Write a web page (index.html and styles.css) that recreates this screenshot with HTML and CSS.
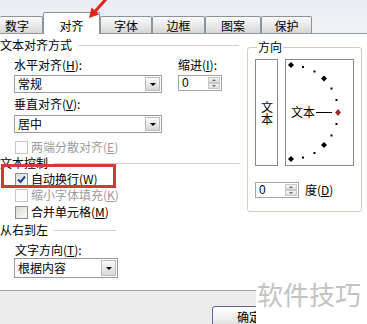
FILE: index.html
```html
<!DOCTYPE html>
<html lang="zh-CN">
<head>
    <meta charset="UTF-8">
    <title>单元格格式 - 对齐</title>
    <link rel="stylesheet" href="styles.css">
</head>
<body>
    <div class="dialog">
        <div class="tabs">
            <div class="tab first">数字</div>
            <div class="tab active">对齐</div>
            <div class="tab">字体</div>
            <div class="tab">边框</div>
            <div class="tab">图案</div>
            <div class="tab">保护</div>
        </div>

        <div class="panel">
            <div class="left">
                <div class="group-title t-align"><span>文本对齐方式</span></div>

                <div class="align-row">
                    <div class="align-col">
                        <div class="label l-h">水平对齐(<u>H</u>):</div>
                        <div class="select s-h"><span>常规</span><i class="drop"></i></div>
                        <div class="label l-v">垂直对齐(<u>V</u>):</div>
                        <div class="select s-v"><span>居中</span><i class="drop"></i></div>
                    </div>
                    <div class="indent">
                        <div class="label l-h">缩进(<u>I</u>):</div>
                        <div class="spin s-indent">
                            <span>0</span>
                            <div class="spin-btns"><i class="up"></i><i class="down"></i></div>
                        </div>
                    </div>
                </div>

                <div class="check disabled c-justify">
                    <i class="box"></i><span>两端分散对齐(<u>E</u>)</span>
                </div>

                <div class="group-title t-control"><span>文本控制</span></div>
                <div class="check c-wrap">
                    <i class="box">
                        <svg width="11" height="11" viewBox="0 0 11 11"><path d="M2 5.5 L4.5 8 L9 2.5" fill="none" stroke="#24408e" stroke-width="2"/></svg>
                    </i><span>自动换行(<u>W</u>)</span>
                </div>
                <div class="check disabled c-shrink">
                    <i class="box"></i><span>缩小字体填充(<u>K</u>)</span>
                </div>
                <div class="check c-merge">
                    <i class="box"></i><span>合并单元格(<u>M</u>)</span>
                </div>

                <div class="group-title t-rtl"><span>从右到左</span></div>
                <div class="label l-dir">文字方向(<u>T</u>):</div>
                <div class="select s-dir"><span>根据内容</span><i class="drop"></i></div>
            </div>

            <fieldset class="orient">
                <legend>方向</legend>
                <div class="orient-boxes">
                    <div class="vbox"><span>文本</span></div>
                    <div class="dial">
                        <svg width="67" height="105" viewBox="0 0 67 105">
                            <g fill="#000">
                                <polygon points="5,2 8,5 5,8 2,5"/>
                                <rect x="16" y="6" width="2" height="2"/>
                                <rect x="27.5" y="10.5" width="2" height="2"/>
                                <polygon points="38,15.5 41,18.5 38,21.5 35,18.5"/>
                                <rect x="44.5" y="27.5" width="2" height="2"/>
                                <rect x="49.5" y="39" width="2" height="2"/>
                                <rect x="49.5" y="63" width="2" height="2"/>
                                <rect x="44.5" y="74.5" width="2" height="2"/>
                                <polygon points="38,82 41,85 38,88 35,85"/>
                                <rect x="27.5" y="92" width="2" height="2"/>
                                <rect x="16" y="96.5" width="2" height="2"/>
                                <polygon points="5,96 8,99 5,102 2,99"/>
                            </g>
                            <text x="5" y="57" font-size="12" font-family="Noto Sans CJK SC, sans-serif">文本</text>
                            <line x1="30" y1="52.5" x2="46" y2="52.5" stroke="#000" stroke-width="1"/>
                            <polygon points="52,49 55,52.5 52,56 49,52.5" fill="#a32a2a"/>
                        </svg>
                    </div>
                </div>
                <div class="degree-row">
                    <div class="spin s-deg">
                        <span>0</span>
                        <div class="spin-btns"><i class="up"></i><i class="down"></i></div>
                    </div>
                    <div class="label">度(<u>D</u>)</div>
                </div>
            </fieldset>
        </div>

        <div class="footer">
            <div class="btn">确定</div>
        </div>

        <!-- overlays -->
        <div class="highlight"></div>
        <svg class="arrow" width="26" height="22" viewBox="0 0 26 22">
            <line x1="22" y1="-2" x2="10" y2="11.5" stroke="#e3231c" stroke-width="3"/>
            <polygon points="4,18 14,14.5 6.5,7.5" fill="#e3231c"/>
        </svg>
        <div class="watermark">软件技巧</div>
    </div>
</body>
</html>
```

FILE: styles.css
```css
* { box-sizing: border-box; }

body {
    margin: 0;
    font-family: "Noto Sans CJK SC", "Liberation Sans", sans-serif;
    font-size: 12px;
    color: #000;
    background: #fff;
    overflow: hidden;
}

u { text-decoration: underline; }

.dialog {
    position: relative;
    width: 367px;
    height: 324px;
    display: flex;
    flex-direction: column;
    overflow: hidden;
}

/* tabs */
.tabs {
    height: 34px;
    flex-shrink: 0;
    display: flex;
    align-items: flex-end;
    background: linear-gradient(#e9edf3, #f1f2f4);
    border-bottom: 1px solid #8f9aa3;
}

.tab {
    width: 52px;
    height: 17px;
    padding-top: 2px;
    line-height: 14px;
    text-align: center;
    border: 1px solid #8c9499;
    border-bottom: none;
    border-radius: 2px 2px 0 0;
    background: linear-gradient(#fbfbfb, #e6e6e6 60%, #d6d6d6);
}

.tab.first {
    width: 43px;
    padding-right: 8px;
    border-left: none;
}

.tab.active {
    width: 57px;
    height: 22px;
    padding-top: 6px;
    margin-bottom: -1px;
    background: #fff;
}

.tab:nth-child(4) { width: 53px; }
.tab:nth-child(5) { width: 56px; }
.tab:nth-child(6) { width: 51px; }

/* main panel */
.panel {
    height: 256px;
    flex-shrink: 0;
    display: flex;
    background: #fff;
}

.left {
    width: 239px;
    padding-top: 4px;
    display: flex;
    flex-direction: column;
}

.label {
    height: 14px;
    line-height: 14px;
    white-space: nowrap;
}

.group-title {
    height: 14px;
    line-height: 14px;
    display: flex;
    align-items: center;
}

.group-title::after {
    content: "";
    flex: 1;
    height: 1px;
    margin-left: 6px;
    background: #d4d0c8;
}

.t-control { margin-top: 2px; }
.t-rtl { margin-top: 4px; width: 116px; }

.align-row {
    display: flex;
}

.align-col {
    margin-left: 14px;
    width: 148px;
    display: flex;
    flex-direction: column;
}

.l-h { margin-top: 6px; }
.l-v { margin-top: 4px; }

.select {
    display: flex;
    height: 18px;
    border: 1px solid #989898;
    background: #fff;
}

.select span {
    flex: 1;
    padding-left: 3px;
    line-height: 16px;
}

.s-h { margin-top: 3px; }
.s-v { margin-top: 4px; }

.drop {
    width: 15px;
    margin: 1px;
    border: 1px solid #bcbcbc;
    background: linear-gradient(#fafafa, #d8d8d8);
    display: flex;
    align-items: center;
    justify-content: center;
}

.drop::after {
    content: "";
    border-left: 3px solid transparent;
    border-right: 3px solid transparent;
    border-top: 3px solid #000;
}

.indent {
    margin-left: 16px;
    display: flex;
    flex-direction: column;
}

.spin {
    display: flex;
    width: 44px;
    height: 16px;
    border: 1px solid #a5a5a5;
    background: #fff;
}

.spin span {
    flex: 1;
    padding-left: 3px;
    line-height: 14px;
    font-family: "Liberation Sans", sans-serif;
}

.s-indent { margin-top: 3px; }

.spin-btns {
    width: 14px;
    padding: 1px;
    display: flex;
    flex-direction: column;
}

.spin-btns i {
    flex: 1;
    border: 1px solid #c8c8c8;
    background: linear-gradient(#f6f6f6, #dcdcdc);
    display: flex;
    align-items: center;
    justify-content: center;
}

.spin-btns .up::after {
    content: "";
    border-left: 2px solid transparent;
    border-right: 2px solid transparent;
    border-bottom: 2px solid #5b6f86;
}

.spin-btns .down::after {
    content: "";
    border-left: 2px solid transparent;
    border-right: 2px solid transparent;
    border-top: 2px solid #5b6f86;
}

/* checkboxes */
.check {
    height: 14px;
    margin-left: 15px;
    display: flex;
    align-items: center;
    line-height: 14px;
    white-space: nowrap;
}

.check span { margin-left: 3px; }

.box {
    width: 13px;
    height: 13px;
    border: 1px solid #8e8f8f;
    background: linear-gradient(135deg, #d9d9d4, #fbfbfb);
    display: flex;
    align-items: center;
    justify-content: center;
}

.check.disabled { color: #9b9b9b; }
.check.disabled .box {
    border-color: #c6c6c6;
    background: #fdfdfd;
}

.c-justify { margin-top: 7px; }
.c-wrap { margin-top: 2px; }
.c-shrink { margin-top: 2px; }
.c-merge { margin-top: 3px; }

.l-dir { margin-top: 6px; margin-left: 15px; }

.s-dir {
    margin-top: 1px;
    margin-left: 14px;
    width: 104px;
    height: 20px;
}

.s-dir span { line-height: 18px; }

/* orientation group */
.orient {
    margin: 6px 0 0 8px;
    padding: 5px 7px 0;
    width: 113px;
    height: 172px;
    border: 1px solid #d0d0bf;
    border-radius: 3px;
}

.orient legend {
    padding: 0 1px;
    margin-left: 2px;
    line-height: 14px;
}

.orient-boxes {
    display: flex;
    gap: 7px;
}

.vbox {
    width: 23px;
    height: 107px;
    border: 1px solid #8a8a8a;
    display: flex;
    align-items: center;
    justify-content: center;
}

.vbox span {
    writing-mode: vertical-rl;
    line-height: 12px;
}

.dial {
    width: 69px;
    height: 107px;
    border: 1px solid #8a8a8a;
}

.dial svg { display: block; }

.degree-row {
    margin-top: 16px;
    display: flex;
    align-items: center;
    gap: 6px;
}

/* footer */
.footer {
    flex: 1;
    background: #ececec;
    border-top: 1px solid #a3a3a3;
    padding: 15px 0 0 212px;
}

.btn {
    width: 74px;
    height: 23px;
    border: 1px solid #4f6f94;
    border-radius: 3px;
    background: linear-gradient(#ffffff, #eeeeee 60%, #d2d2d2);
    text-align: center;
    line-height: 20px;
}

/* overlays */
.highlight {
    position: absolute;
    left: 1px;
    top: 164px;
    width: 115px;
    height: 24px;
    border: 3px solid #d23a3a;
}

.arrow {
    position: absolute;
    left: 85px;
    top: 0;
}

.watermark {
    position: absolute;
    left: 256px;
    top: 279px;
    width: 111px;
    height: 45px;
    background: #fff;
    color: #c3c3c3;
    font-size: 26px;
    line-height: 30px;
    padding-left: 1px;
    white-space: nowrap;
}
```
